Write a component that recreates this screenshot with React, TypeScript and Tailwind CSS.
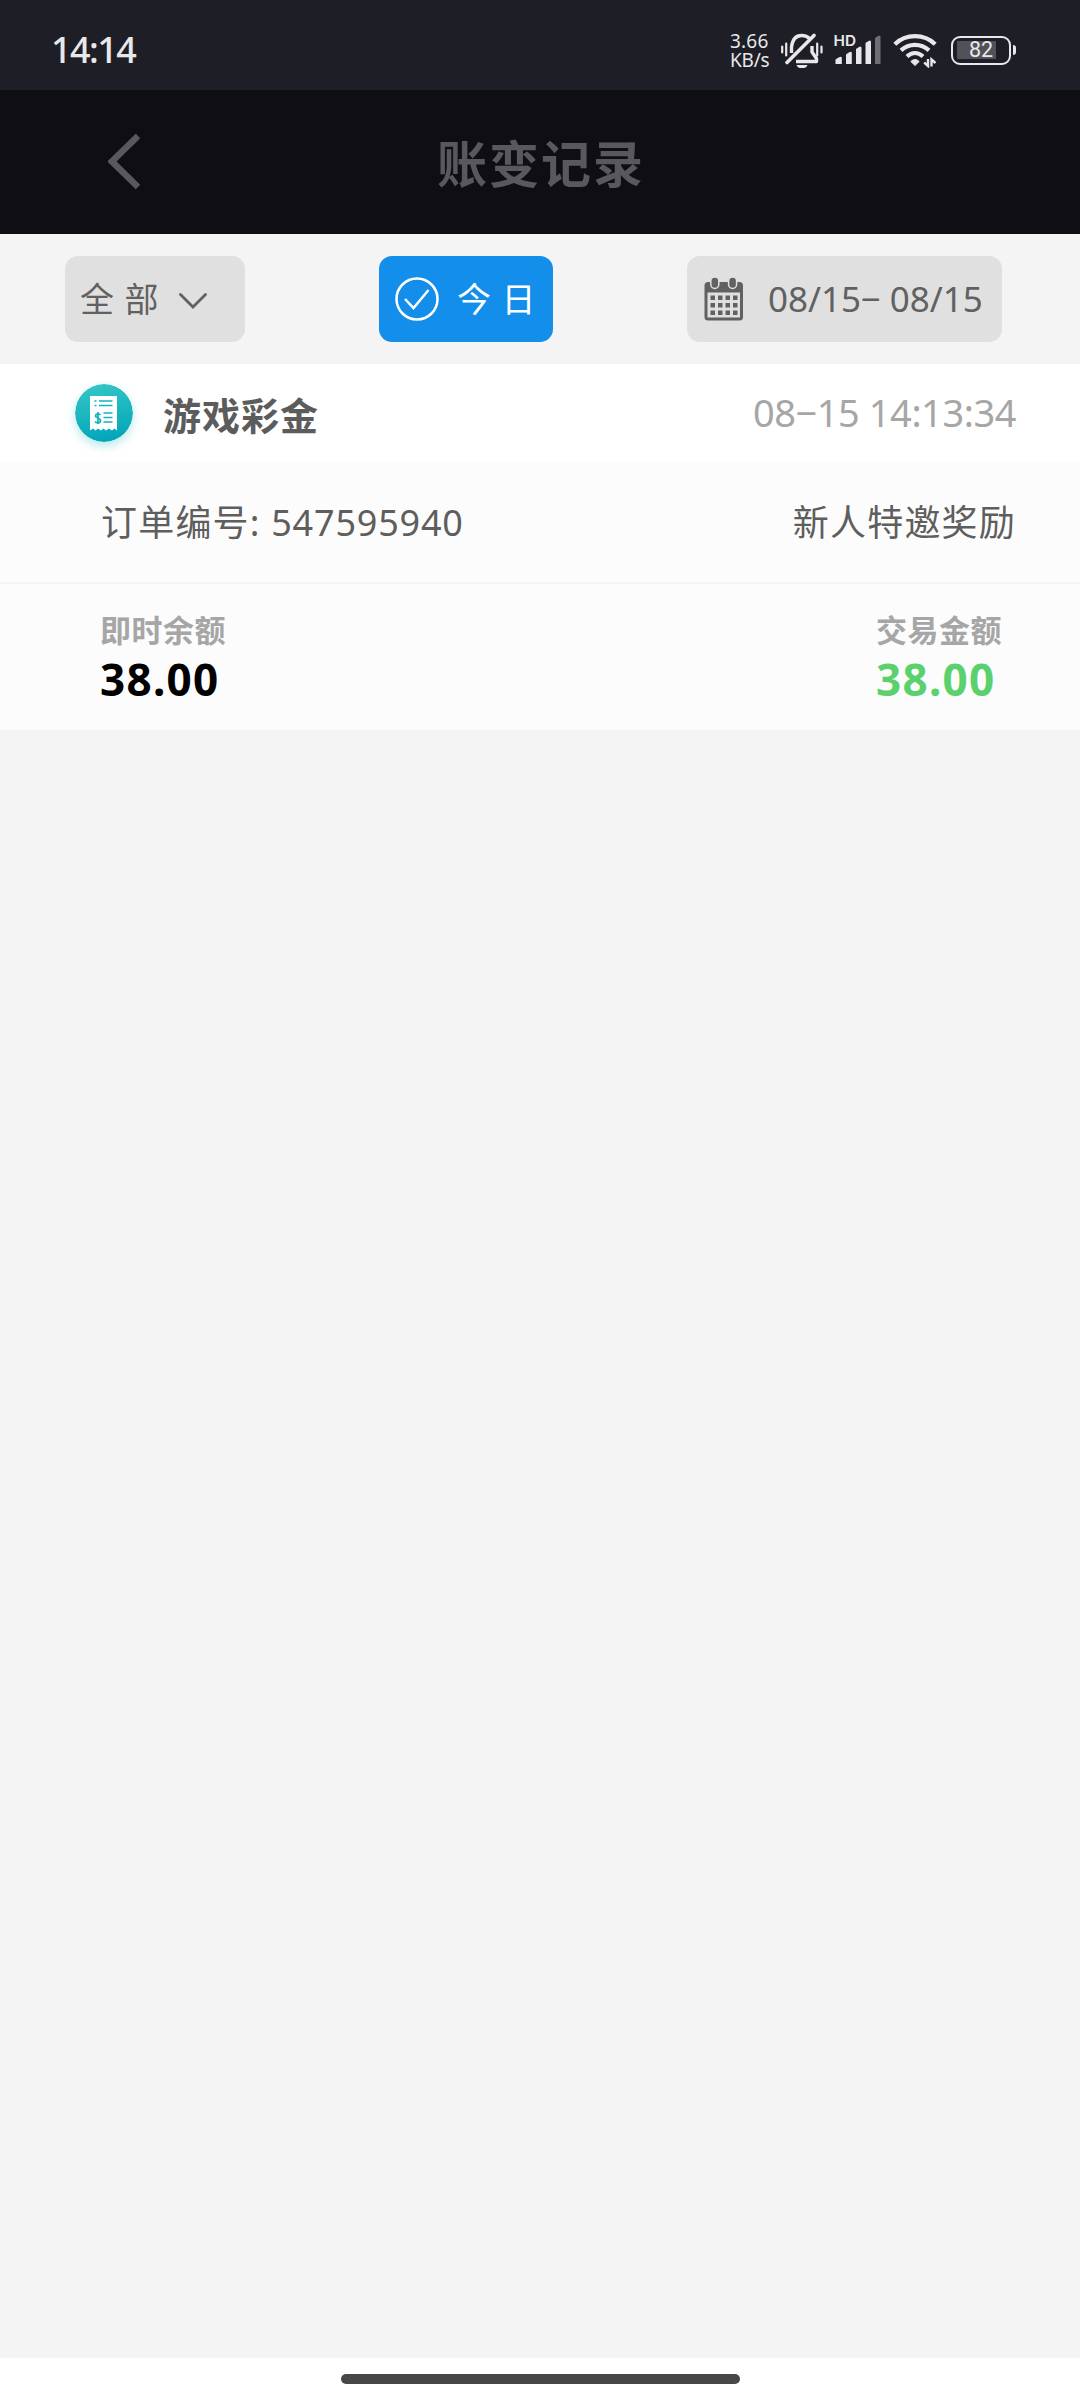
const textFont = "font-['Noto_Sans','Noto_Sans_CJK_SC',sans-serif]";

const records = [
  {
    title: "游戏彩金",
    time: "08−15 14:13:34",
    order: "547595940",
    remark: "新人特邀奖励",
    balance: "38.00",
    amount: "38.00",
  },
];

function MutedBell() {
  return (
    <svg className="ml-2.5 h-9 w-[42px]" viewBox="0 0 42 36" fill="none" stroke="#e8e8ea">
      <path
        d="M10.500 21V15C11.500 7.500 15 3.500 20.500 3.500C24 3.500 27 4.800 29 7M31 14V20L35.500 26.500V29.500H15"
        strokeWidth="3.4"
        strokeLinejoin="round"
      />
      <path d="M6 30.500L33 3.500" strokeWidth="3.6" strokeLinecap="round" />
      <path d="M15.500 33H26.500C25 37.500 17 37.500 15.500 33Z" fill="#e8e8ea" stroke="none" />
      <path d="M1.200 14.500V20.500M5.200 11.500V23.500M36.200 11.500V23.500M40.500 14.500V20.500" strokeWidth="2.200" strokeLinecap="round" />
    </svg>
  );
}

function Signal() {
  return (
    <svg className="ml-2.5 h-9 w-12" viewBox="0 0 48 36" fill="#e8e8ea">
      <text
        x="0.5"
        y="13.5"
        fontSize="14.5"
        fontWeight="600"
        fontFamily="Inter, sans-serif"
        textLength="22.5"
        lengthAdjust="spacingAndGlyphs"
      >
        HD
      </text>
      <path d="M2.500 27.500Q8.500 23 8.800 26V32H2.500Z" />
      <path d="M13 22.500Q18.500 18 18.800 21V32H13Z" />
      <path d="M23 17Q28.500 12.500 28.500 16V32H23Z" />
      <path d="M32.500 11Q38 6.500 38 10V32H32.500Z" />
      <path d="M42 6Q47.500 1.500 47.500 5V32H42Z" fill="#6d6d73" />
    </svg>
  );
}

function Wifi() {
  return (
    <svg className="ml-3 h-9 w-11" viewBox="0 0 44 36" fill="none" stroke="#e8e8ea">
      <path d="M1.800 12.200C13 1.500 31 1.500 42.200 12.200" strokeWidth="4.200" />
      <path d="M8 18.400C16 10.900 28 10.900 36 18.400" strokeWidth="4.200" />
      <path d="M14 24.500C19 20 25 20 30 24.500" strokeWidth="4.200" />
      <path d="M17.800 29.500Q22 25.500 26.200 29.500L22 33.500Z" fill="#e8e8ea" stroke="#e8e8ea" strokeLinejoin="round" />
      <path d="M35 27V34L31.200 30.500M38.500 34.500V27.500L42.500 31" strokeWidth="2.400" />
    </svg>
  );
}

function Battery() {
  return (
    <div className="ml-3.5 flex items-center gap-0.5">
      <div className="flex h-[29px] w-[60px] items-center justify-center rounded-[9px] border-[2.5px] border-[#e8e8ea]">
        <div className="flex h-[18px] w-[48px] items-center justify-center bg-linear-to-r from-[#515157] from-82% to-transparent to-82% font-['Roboto',sans-serif] text-[21.5px] leading-none">
          82
        </div>
      </div>
      <div className="h-2.5 w-[3px] rounded-r-sm bg-[#e8e8ea]" />
    </div>
  );
}

function StatusBar() {
  return (
    <div className="flex h-[90px] items-center bg-[#1e1e26] pt-2.5 pr-[64px] pl-[51px] text-[#e8e8ea]">
      <span className="text-[36px] leading-9 font-medium tracking-[-1.6px]">14:14</span>
      <div className="ml-auto w-[41px] pt-0.5 text-[19px] leading-[19px] whitespace-nowrap">
        <div className="tracking-[0.2px]">3.66</div>
        <div className="tracking-[-0.2px]">KB/s</div>
      </div>
      <MutedBell />
      <Signal />
      <Wifi />
      <Battery />
    </div>
  );
}

function CalendarIcon() {
  return (
    <svg className="h-[44px] w-[40px]" viewBox="0 0 40 44">
      <rect x="0.500" y="5" width="38.500" height="38.500" rx="3.500" fill="#616161" />
      <rect x="3.500" y="15.500" width="32.500" height="25" fill="#e0e0e0" />
      {[10.8, 28.6].map((x) => (
        <rect key={x} x={x - 4} y="0" width="8" height="11.500" rx="4" fill="#616161" stroke="#e0e0e0" strokeWidth="1.500" />
      ))}
      {[18.5, 26, 33.5].map((y) =>
        [6.5, 14, 21.5, 29].map((x) => (
          <rect key={`${x}-${y}`} x={x} y={y} width="4.500" height="4.500" fill="#616161" />
        ))
      )}
    </svg>
  );
}

function Filters() {
  return (
    <div className="flex h-[130px] items-center justify-between pr-[78px] pl-[65px] text-[34px] text-[#616161]">
      <button className="flex h-[86px] w-[180px] items-center rounded-[13px] bg-[#e0e0e0] pl-[15px]">
        <span className="leading-none tracking-[0.8px]">全 部</span>
        <svg className="mt-1 ml-5 h-4 w-7" viewBox="0 0 28 16" fill="none" stroke="#616161" strokeWidth="2.800">
          <path d="M1.500 1.500L14 14L26.500 1.500" strokeLinecap="round" />
        </svg>
      </button>
      <button className="flex h-[86px] w-[174px] items-center rounded-[13px] bg-[#138eea] pl-4 text-white">
        <svg className="h-11 w-11" viewBox="0 0 44 44" fill="none" stroke="white" strokeWidth="2.500">
          <circle cx="22" cy="22" r="20.500" />
          <path d="M10 22L18.500 31L33.500 13" />
        </svg>
        <span className="ml-[18px] leading-none tracking-[0.8px]">今 日</span>
      </button>
      <button className="flex h-[86px] w-[315px] items-center rounded-[13px] bg-[#e0e0e0] pl-[17px]">
        <CalendarIcon />
        <span className="ml-6 pb-0.5 text-[35px] leading-none tracking-[-0.05px] whitespace-nowrap">08/15− 08/15</span>
      </button>
    </div>
  );
}

function ReceiptIcon() {
  return (
    <svg className="h-[58px] w-[58px] rounded-full shadow-[0_4px_10px_rgba(18,178,192,0.3)]" viewBox="0 0 58 58">
      <defs>
        <linearGradient id="receipt" x1="0.400" y1="0" x2="0.600" y2="1">
          <stop offset="0" stopColor="#33c5c6" />
          <stop offset="1" stopColor="#00a5b8" />
        </linearGradient>
      </defs>
      <circle cx="29" cy="29" r="29" fill="url(#receipt)" />
      <path
        d="M15 12H42V46.500L39.500 44.500L37 46.500L34 44.500L31 46.500L28.500 44.500L26 46.500L23 44.500L20.500 46.500L18 44.500L15 46.500Z"
        fill="white"
      />
      <g stroke="#12b2c0" strokeWidth="1.700" fill="none">
        <path d="M19.500 17H21.500M24 17H37.500M19.500 21.500H21.500M24 21.500H37.500" />
        <path d="M28.500 29H37.500M28.500 33.500H37.500M28.500 38H37.500" />
        <path d="M25.500 31C24 29 20.500 29.500 20.500 32C20.500 34.500 25.500 33.500 25.500 36.500C25.500 39.500 21.500 39.500 20 37.500M23 28V40" />
      </g>
    </svg>
  );
}

export default function App() {
  return (
    <div className={`flex h-[2400px] w-[1080px] flex-col bg-[#f4f4f4] ${textFont}`}>
      <StatusBar />
      <header className="grid h-36 grid-cols-[1fr_auto_1fr] items-center bg-[#0f0e13] text-[#59585d]">
        <svg className="ml-[108px] h-14 w-8" viewBox="0 0 32 56" fill="none" stroke="#59585d" strokeWidth="6.500">
          <path d="M30 2L4 27.500L30 53" />
        </svg>
        <h1 className="pt-1 pl-0.5 text-[50px] leading-none font-bold tracking-[2px]">账变记录</h1>
      </header>
      <Filters />

      {records.map((record) => (
        <section key={record.order} className="bg-[#fcfcfc]">
          <div className="flex h-[98px] items-center bg-white pr-[64px] pl-[75px]">
            <ReceiptIcon />
            <h2 className="ml-[30px] pt-[3px] text-[38px] leading-none font-bold tracking-[1px] text-[#5c5c5c]">
              {record.title}
            </h2>
            <span className="ml-auto pb-0.5 text-[38px] leading-none tracking-[-0.45px] text-[#a6a6a6]">
              {record.time}
            </span>
          </div>
          <div className="flex h-[122px] items-center justify-between border-b-2 border-[#f4f4f4] pt-0.5 pr-[64px] pl-[101px] text-[36px] leading-none text-[#5e5e5e]">
            <span className="tracking-[1.2px]">
              订单编号: <span className="tracking-[0.8px]">{record.order}</span>
            </span>
            <span className="tracking-[1.2px]">{record.remark}</span>
          </div>
          <div className="flex h-[146px] justify-between pt-7 pr-[78px] pl-[100px] font-bold">
            <div>
              <div className="text-[31px] leading-9 tracking-[0.5px] text-[#a6a6a6]">即时余额</div>
              <div className="text-[44px] leading-[62px] tracking-[1.3px] text-black">{record.balance}</div>
            </div>
            <div>
              <div className="text-[31px] leading-9 tracking-[0.5px] text-[#a6a6a6]">交易金额</div>
              <div className="text-[44px] leading-[62px] tracking-[1.3px] text-[#5bd16e]">{record.amount}</div>
            </div>
          </div>
        </section>
      ))}

      <div className="mt-auto flex h-[42px] justify-center bg-white pt-4">
        <div className="h-2.5 w-[399px] rounded-full bg-[#474747]" />
      </div>
    </div>
  );
}
